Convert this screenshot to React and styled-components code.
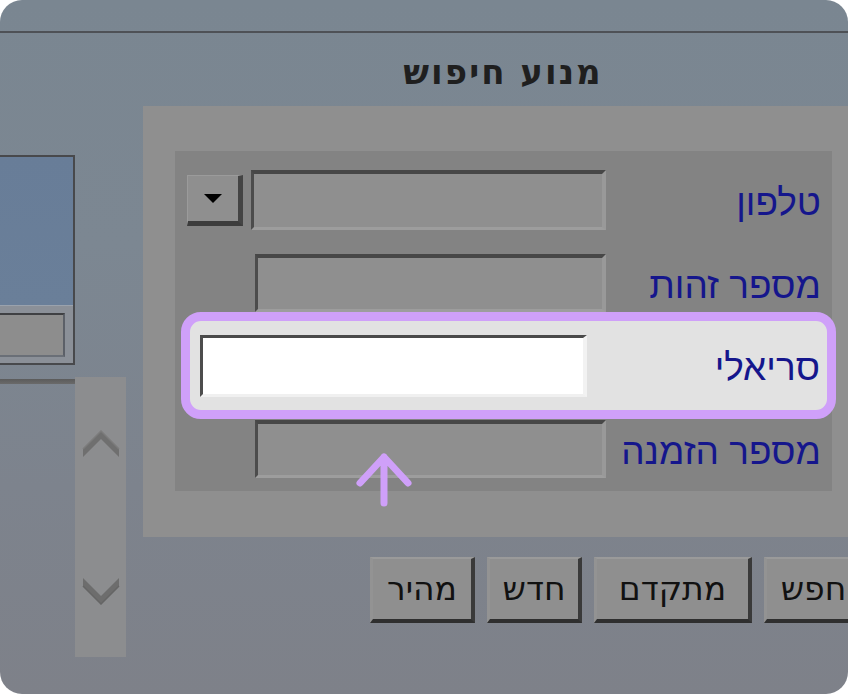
import React from 'react';
import styled, { createGlobalStyle } from 'styled-components';

const GlobalStyle = createGlobalStyle`
  html, body {
    margin: 0;
    padding: 0;
    background: #ffffff;
  }
  body {
    font-family: "Liberation Sans", "DejaVu Sans", Arial, sans-serif;
  }
`;

const Card = styled.div`
  position: relative;
  width: 848px;
  height: 694px;
  border-radius: 22px;
  overflow: hidden;
  background: linear-gradient(180deg, #7a8691 0%, #7c8792 35%, #7d838d 70%, #7e8189 100%);
`;

const TopBar = styled.div`
  height: 31px;
  border-bottom: 2px solid #4e5156;
`;

const Body = styled.div`
  display: flex;
  align-items: flex-start;
`;

const SideColumn = styled.div`
  flex: 0 0 143px;
  padding-top: 122px;
`;

const ListBox = styled.div`
  margin-left: -20px;
  width: 91px;
  border: 2px solid #48494c;
`;

const BlueArea = styled.div`
  height: 148px;
  background: linear-gradient(180deg, #687d98 0%, #6a7f99 100%);
  border-bottom: 1px solid #9aa2ad;
`;

const FieldStrip = styled.div`
  height: 57px;
  display: flex;
  justify-content: flex-end;
  align-items: flex-start;
  padding: 7px 8px 0 0;
  box-sizing: border-box;
  background: #8b9098;
`;

const SmallField = styled.div`
  width: 80px;
  height: 44px;
  box-sizing: border-box;
  background: #8d8d8d;
  border-top: 2px solid #3f4043;
  border-right: 2px solid #5c6068;
  border-bottom: 2px solid #6a6f77;
`;

const SideRow = styled.div`
  display: flex;
  align-items: flex-start;
  margin-top: 12px;
`;

const SideRule = styled.div`
  width: 75px;
  height: 5px;
  margin-top: 2px;
  background: linear-gradient(180deg, #5b5b5b, #6a6a6a);
`;

const ScrollBar = styled.div`
  width: 51px;
  height: 280px;
  box-sizing: border-box;
  padding: 53px 0 52px;
  background: #8c8d8f;
  display: flex;
  flex-direction: column;
  justify-content: space-between;
  align-items: center;
`;

const MainColumn = styled.div`
  flex: 0 0 720px;
`;

const Title = styled.h1`
  margin: 0;
  height: 73px;
  padding-top: 4px;
  box-sizing: border-box;
  display: flex;
  align-items: center;
  justify-content: center;
  direction: rtl;
  font-family: "DejaVu Sans", "Liberation Sans", sans-serif;
  font-weight: bold;
  font-size: 34px;
  letter-spacing: 2px;
  color: #1f1f1f;
`;

const Panel = styled.div`
  height: 431px;
  box-sizing: border-box;
  padding: 45px 31px 0 32px;
  background: #8f8f8f;
`;

const InnerPanel = styled.div`
  height: 340px;
  box-sizing: border-box;
  padding-top: 19px;
  background: #838383;
  display: flex;
  flex-direction: column;
`;

const Row = styled.div`
  display: flex;
  justify-content: flex-end;
  align-items: center;
  height: ${(p) => p.$h}px;
  margin-top: ${(p) => p.$top}px;
`;

const Label = styled.div`
  width: 226px;
  box-sizing: border-box;
  padding-right: 11px;
  direction: rtl;
  text-align: right;
  font-size: 37px;
  line-height: 1;
  color: #15168c;
  white-space: nowrap;
  margin-top: 4px;
`;

const Input = styled.div`
  width: ${(p) => p.$w}px;
  height: ${(p) => p.$h}px;
  box-sizing: border-box;
  background: #8f8f8f;
  border-top: 4px solid #474747;
  border-left: 3px solid #4c4c4c;
  border-bottom: 3px solid #9d9d9d;
  border-right: 4px solid #999999;
`;

const Dropdown = styled.div`
  width: 56px;
  height: 51px;
  margin-right: 8px;
  box-sizing: border-box;
  background: #8f8f8f;
  border-top: 1px solid #9b9b9b;
  border-left: 1px solid #9b9b9b;
  border-right: 5px solid #444444;
  border-bottom: 5px solid #3c3c3c;
  display: flex;
  align-items: center;
  justify-content: center;
`;

const Highlight = styled.div`
  height: 107px;
  margin: 0 -4px 0 6px;
  box-sizing: border-box;
  border: 9px solid #cfa0f9;
  border-radius: 20px;
  background: #e2e2e2;
  display: flex;
  justify-content: space-between;
  align-items: center;
  padding: 0 7px 0 10px;
`;

const WhiteField = styled.div`
  width: 387px;
  height: 62px;
  box-sizing: border-box;
  background: #ffffff;
  border-top: 3px solid #4a4a4a;
  border-left: 3px solid #4d4d4d;
  border-bottom: 3px solid #f0f0f0;
  border-right: 4px solid #f2f2f2;
`;

const HighlightLabel = styled(Label)`
  width: auto;
  padding-right: 0;
`;

const ArrowMark = styled.svg`
  position: absolute;
  left: 354px;
  top: 451px;
`;

const ButtonRow = styled.div`
  display: flex;
  direction: rtl;
  gap: 12px;
  margin-top: 20px;
  margin-right: -1px;
`;

const Button = styled.div`
  width: ${(p) => p.$w}px;
  height: 66px;
  box-sizing: border-box;
  background: #8f8f8f;
  border-top: 2px solid #9a9a9a;
  border-left: 3px solid #939393;
  border-right: 4px solid #3a3a3a;
  border-bottom: 4px solid #2f2f2f;
  display: flex;
  align-items: center;
  justify-content: center;
  font-family: "DejaVu Sans", "Liberation Sans", sans-serif;
  font-size: 33px;
  color: #111111;
  padding-bottom: 2px;
`;

const ChevronUp = () => (
  <svg width="38" height="28" viewBox="0 0 38 28">
    <polygon points="1,19 19,1 37,19 37,27 19,9 1,27" fill="#6f6f6f" />
    <polyline points="1,19 19,1 37,19" fill="none" stroke="#7c7c7c" strokeWidth="1.5" />
  </svg>
);

const ChevronDown = () => (
  <svg width="38" height="28" viewBox="0 0 38 28">
    <polygon points="1,1 19,19 37,1 37,9 19,27 1,9" fill="#6d6d6d" />
    <polyline points="1,9 19,27 37,9" fill="none" stroke="#656565" strokeWidth="1.5" />
  </svg>
);

const App = () => (
  <>
    <GlobalStyle />
    <Card>
      <TopBar />
      <Body>
        <SideColumn>
          <ListBox>
            <BlueArea />
            <FieldStrip>
              <SmallField />
            </FieldStrip>
          </ListBox>
          <SideRow>
            <SideRule />
            <ScrollBar>
              <ChevronUp />
              <ChevronDown />
            </ScrollBar>
          </SideRow>
        </SideColumn>
        <MainColumn>
          <Title>מנוע חיפוש</Title>
          <Panel>
            <InnerPanel>
              <Row $h={60} $top={0}>
                <Dropdown>
                  <svg width="18" height="9" viewBox="0 0 18 9">
                    <polygon points="0,0 18,0 9,9" fill="#000" />
                  </svg>
                </Dropdown>
                <Input $w={355} $h={60} />
                <Label>טלפון</Label>
              </Row>
              <Row $h={58} $top={24}>
                <Input $w={351} $h={58} />
                <Label>מספר זהות</Label>
              </Row>
              <Highlight>
                <WhiteField />
                <HighlightLabel>סריאלי</HighlightLabel>
              </Highlight>
              <Row $h={58} $top={1}>
                <Input $w={351} $h={58} />
                <Label>מספר הזמנה</Label>
              </Row>
            </InnerPanel>
          </Panel>
          <ButtonRow>
            <Button $w={100}>חפש</Button>
            <Button $w={158}>מתקדם</Button>
            <Button $w={95}>חדש</Button>
            <Button $w={105}>מהיר</Button>
          </ButtonRow>
        </MainColumn>
      </Body>
      <ArrowMark width="60" height="58" viewBox="0 0 60 58">
        <path d="M30 6 L30 52 M6 32 L30 6 L54 32" fill="none" stroke="#cfa0f9" strokeWidth="7" strokeLinecap="round" strokeLinejoin="round" />
      </ArrowMark>
    </Card>
  </>
);

export default App;
